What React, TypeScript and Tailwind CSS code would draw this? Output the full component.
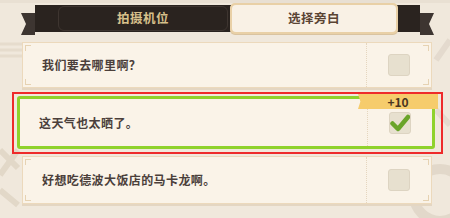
import React from "react";

const font = { fontFamily: '"Noto Sans CJK SC", "Noto Sans", sans-serif' };

function Checkbox({ checked }: { checked?: boolean }) {
  return (
    <div className="w-[22px] h-[22px] rounded-[3px] bg-[#e7e0cf] border border-[#ddd4c2] flex items-center justify-center">
      {checked && (
        <svg width="20" height="18" viewBox="0 0 20 18">
          <path d="M2.5 9.5 L8 15 L18 3" fill="none" stroke="#6aa42a" strokeWidth="4.5" strokeLinecap="round" strokeLinejoin="round" />
        </svg>
      )}
    </div>
  );
}

function Corner({ className }: { className: string }) {
  return <div className={"absolute w-[6px] h-[6px] border-[#e6d2b2] " + className} />;
}

function CardBody({ text, checked }: { text: string; checked?: boolean }) {
  return (
    <div className="flex h-full items-stretch">
      <div className="flex-1 flex items-center pl-[19px] text-[12px] font-bold text-[#4b3f3b] tracking-[0.4px]">{text}</div>
      <div className="w-[65px] border-l border-dotted border-[#e5d6bf] flex items-center justify-center">
        <Checkbox checked={checked} />
      </div>
    </div>
  );
}

function Card({ text, h }: { text: string; h: string }) {
  return (
    <div className={"relative ml-[10px] w-[410px] bg-[#faf3e8] border border-[#ecd9bc] shadow-[0_2px_0_#e4d6c2] " + h}>
      <Corner className="left-[2px] top-[2px] border-l border-t" />
      <Corner className="right-[2px] top-[2px] border-r border-t" />
      <Corner className="left-[2px] bottom-[2px] border-l border-b" />
      <Corner className="right-[2px] bottom-[2px] border-r border-b" />
      <CardBody text={text} />
    </div>
  );
}

export default function App() {
  return (
    <div className="relative w-[450px] h-[218px] overflow-hidden bg-[#f0e8dc]" style={font}>
      {/* faint background decoration */}
      <svg className="absolute inset-0" width="450" height="218" viewBox="0 0 450 218">
        <g fill="none" stroke="#e6dccd" strokeWidth="3">
          <line x1="0" y1="44" x2="22" y2="44" />
          <line x1="0" y1="50" x2="22" y2="50" />
          <line x1="0" y1="56" x2="22" y2="56" />
          <path d="M0 150 L18 168 M18 150 L0 175 M0 190 L18 205" stroke="#e2d8c8" strokeWidth="6" />
          <path d="M436 60 L450 40 M436 110 L450 125" stroke="#e4dace" strokeWidth="6" />
        </g>
        <circle cx="440" cy="195" r="26" fill="none" stroke="#e2d8ca" strokeWidth="10" />
        <rect x="0" y="0" width="450" height="3" fill="#e9e0d3" />
      </svg>

      <div className="relative">
        {/* Tab ribbon */}
        <div className="flex items-start pt-[3px] pl-[21px] h-[38px]">
          <svg width="14" height="22" viewBox="0 0 14 22" className="mt-[10px]">
            <polygon points="0,0 14,0 14,22 0,22 5,11" fill="#3d3531" />
          </svg>
          <div className="mt-[2px] w-[385px] h-[27px] bg-[#2a231f] flex items-center">
            <div className="ml-[23px] w-[170px] h-[25px] border border-[#3e3530] rounded-[6px] flex items-center justify-center text-[12.5px] font-bold text-[#d7c08b] tracking-[0.5px]">
              拍摄机位
            </div>
            <div className="ml-[2px] w-[168px] h-[31px] bg-[#e9d0a6] rounded-[5px] p-[2px] shadow-[0_1px_0_#d9c3a0]">
              <div className="w-full h-full bg-[#f9f1e5] rounded-[4px] flex items-center justify-center text-[12.5px] font-bold text-[#5a4433] tracking-[0.5px]">
                选择旁白
              </div>
            </div>
          </div>
          <svg width="14" height="22" viewBox="0 0 14 22" className="mt-[10px]">
            <polygon points="0,0 14,0 9,11 14,22 0,22" fill="#3d3531" />
          </svg>
        </div>

        {/* Options */}
        <div className="flex flex-col pl-[12px] mt-[4px]">
          <Card text="我们要去哪里啊？" h="h-[46px]" />

          <div className="relative mt-[4px] w-[431px] h-[62px] border-2 border-[#ee2b2b] pt-[2px] pl-[3px]">
            <div className="relative w-[418px] h-[53px] bg-[#faf3e8] border-[3px] border-[#8fd22c] rounded-[3px]">
              <CardBody text="这天气也太晒了。" checked />
            </div>
            <div className="absolute left-[344px] top-[0px] w-[80px] h-[15px] bg-[#f6cc6c] flex items-center justify-center text-[12px] font-bold text-[#4a3520] [clip-path:polygon(2%_0,100%_0,100%_100%,0_100%,3%_50%,0_0)]">
              +10
            </div>
          </div>

          <div className="mt-[2px]">
            <Card text="好想吃德波大饭店的马卡龙啊。" h="h-[48px]" />
          </div>
        </div>
      </div>
    </div>
  );
}
